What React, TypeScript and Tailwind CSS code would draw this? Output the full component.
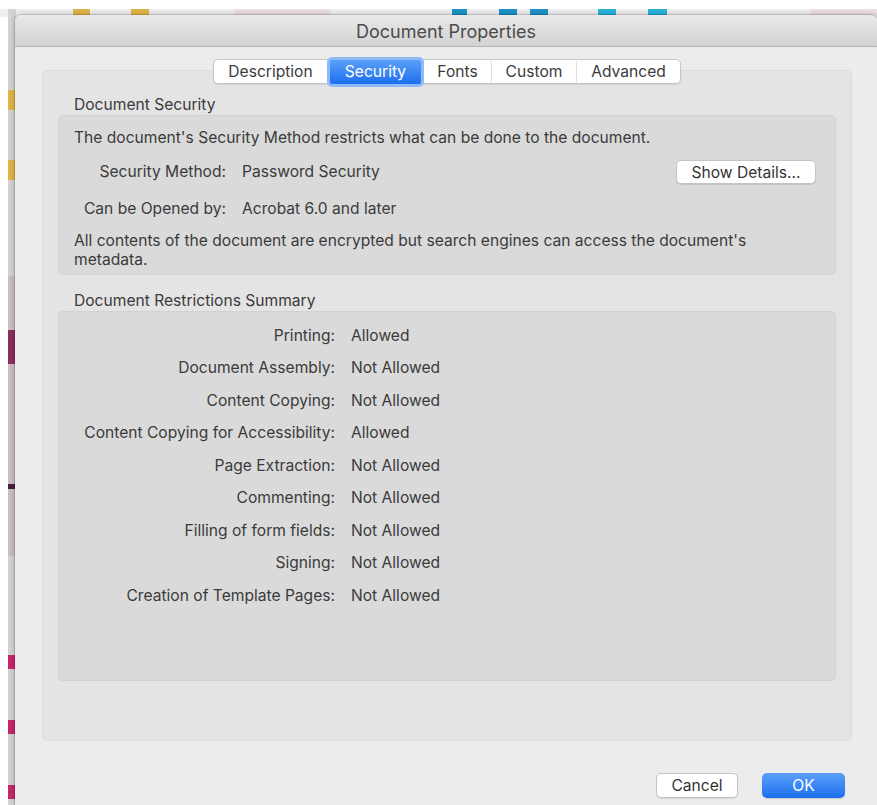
import type { ReactNode } from 'react';

const tabs = [
  { name: 'Description', width: 'w-[113px]' },
  { name: 'Security', width: 'w-[97px]' },
  { name: 'Fonts', width: 'w-[67px]' },
  { name: 'Custom', width: 'w-[85px]' },
  { name: 'Advanced', width: 'w-[104px]' },
];

const restrictions = [
  ['Printing:', 'Allowed'],
  ['Document Assembly:', 'Not Allowed'],
  ['Content Copying:', 'Not Allowed'],
  ['Content Copying for Accessibility:', 'Allowed'],
  ['Page Extraction:', 'Not Allowed'],
  ['Commenting:', 'Not Allowed'],
  ['Filling of form fields:', 'Not Allowed'],
  ['Signing:', 'Not Allowed'],
  ['Creation of Template Pages:', 'Not Allowed'],
];

// bits of the window sitting behind the dialog
const topMarks = [
  { x: 'left-[73px] w-[17px]', c: 'bg-[#e2b548]' },
  { x: 'left-[131px] w-[18px]', c: 'bg-[#e2b548]' },
  { x: 'left-[235px] w-[95px]', c: 'bg-[#ecdfe5]' },
  { x: 'left-[452px] w-[15px]', c: 'bg-[#1e92c9]' },
  { x: 'left-[499px] w-[18px]', c: 'bg-[#1e92c9]' },
  { x: 'left-[530px] w-[18px]', c: 'bg-[#1e92c9]' },
  { x: 'left-[598px] w-[18px]', c: 'bg-[#2ab3d9]' },
  { x: 'left-[648px] w-[19px]', c: 'bg-[#2ab3d9]' },
  { x: 'left-[811px] w-[66px]', c: 'bg-[#ecdfe5]' },
];

const sideMarks = [
  { y: 'top-[90px] h-[20px]', c: 'bg-[#e2b548]' },
  { y: 'top-[160px] h-[20px]', c: 'bg-[#e2b548]' },
  { y: 'top-[276px] h-[280px]', c: 'bg-[#cbbfc5]' },
  { y: 'top-[330px] h-[34px]', c: 'bg-[#8e2d63]' },
  { y: 'top-[484px] h-[5px]', c: 'bg-[#4b1d3c]' },
  { y: 'top-[655px] h-[14px]', c: 'bg-[#c8266f]' },
  { y: 'top-[720px] h-[14px]', c: 'bg-[#c8266f]' },
  { y: 'top-[785px] h-[14px]', c: 'bg-[#c8266f]' },
];

function Field({ label, children }: { label: string; children: ReactNode }) {
  return (
    <div className="flex items-center">
      <div className="w-[167px] shrink-0 text-right">{label}</div>
      <div className="ml-4 flex-1">{children}</div>
    </div>
  );
}

export default function App() {
  return (
    <div
      className="relative w-[877px] h-[805px] overflow-hidden bg-white text-[15.6px] text-[#3b3b3b]"
      style={{ fontFamily: 'Inter, "Noto Sans", sans-serif' }}
    >
      <div className="absolute left-0 right-0 top-[9px] h-[8px] bg-[#efefef]" />
      {topMarks.map((m, i) => (
        <div key={i} className={`absolute top-[9px] h-[8px] ${m.x} ${m.c}`} />
      ))}
      <div className="absolute left-[8px] top-[9px] w-[8px] h-[800px] bg-[#d4d4d4]" />
      {sideMarks.map((m, i) => (
        <div key={i} className={`absolute left-[8px] w-[7px] ${m.y} ${m.c}`} />
      ))}

      <div className="relative ml-[15px] mt-[15px] w-[862px] h-[790px] rounded-t-[6px] bg-[#ececec] shadow-[0_0_0_1px_rgba(0,0,0,0.12),0_0_6px_rgba(0,0,0,0.25)] overflow-hidden">
        {/* title bar */}
        <div className="h-[32px] pt-[2px] flex items-center justify-center bg-gradient-to-b from-[#e9e9e9] to-[#d3d3d3] border-b border-[#b3b3b3] text-[18px] text-[#4b4b4b]">
          Document Properties
        </div>

        <div className="pl-[27px] pr-[25px] pt-[12px]">
          {/* tab strip */}
          <div className="relative z-10 flex justify-center">
            <div className="flex h-[25px] rounded-[5px] border border-[#c6c6c6] bg-white pt-[1px] shadow-[0_1px_1px_rgba(0,0,0,0.08)]">
              {tabs.map((t, i) =>
                t.name === 'Security' ? (
                  <div
                    key={t.name}
                    className={`${t.width} -my-[4px] flex items-center justify-center rounded-[5px] border-[3px] border-[#8fbaf5] bg-gradient-to-b from-[#5a9ff8] to-[#1b6ef0] text-white`}
                  >
                    {t.name}
                  </div>
                ) : (
                  <div
                    key={t.name}
                    className={`${t.width} flex items-center justify-center ${
                      i > 0 && tabs[i - 1].name !== 'Security' ? 'border-l border-[#dedede]' : ''
                    }`}
                  >
                    {t.name}
                  </div>
                )
              )}
            </div>
          </div>

          {/* group box */}
          <div className="-mt-[14px] h-[671px] rounded-[5px] border border-[#dcdcdc] bg-[#e4e4e4] px-[15px] pt-[25px]">
            <div className="pl-[16px] leading-[18px]">Document Security</div>
            <div className="mt-[1px] h-[160px] rounded-[5px] border border-[#d2d2d2] bg-[#dadada] pl-[15px] pr-[19px] pt-[13px]">
              <div className="leading-[18px]">
                The document's Security Method restricts what can be done to the document.
              </div>
              <div className="-ml-[15px] mt-[13px] flex h-[24px] items-center">
                <Field label="Security Method:">Password Security</Field>
                <button className="ml-auto h-[24px] w-[140px] rounded-[5px] border border-[#c4c4c4] bg-white text-[#333] shadow-[0_1px_1px_rgba(0,0,0,0.1)]">
                  Show Details...
                </button>
              </div>
              <div className="-ml-[15px] mt-[16px] h-[18px] flex items-center">
                <Field label="Can be Opened by:">Acrobat 6.0 and later</Field>
              </div>
              <div className="mt-[13px] max-w-[700px] leading-[19px]">
                All contents of the document are encrypted but search engines can access the document's
                metadata.
              </div>
            </div>

            <div className="mt-[17px] pl-[16px] leading-[18px]">Document Restrictions Summary</div>
            <div className="mt-[1px] h-[370px] rounded-[5px] border border-[#d2d2d2] bg-[#dadada] pt-[7px]">
              {restrictions.map(([label, value]) => (
                <div key={label} className="flex h-[32.5px] items-center">
                  <div className="w-[276px] shrink-0 text-right">{label}</div>
                  <div className="ml-4">{value}</div>
                </div>
              ))}
            </div>
          </div>

          {/* dialog buttons */}
          <div className="mt-[32px] flex justify-end gap-[24px] pr-[7px]">
            <button className="h-[25px] w-[82px] rounded-[5px] border border-[#c4c4c4] bg-white text-[#333] shadow-[0_1px_1px_rgba(0,0,0,0.1)]">
              Cancel
            </button>
            <button className="h-[25px] w-[83px] rounded-[5px] bg-gradient-to-b from-[#5a9ff8] to-[#1b6ef0] text-white shadow-[0_1px_1px_rgba(0,0,0,0.15)]">
              OK
            </button>
          </div>
        </div>
      </div>
    </div>
  );
}
